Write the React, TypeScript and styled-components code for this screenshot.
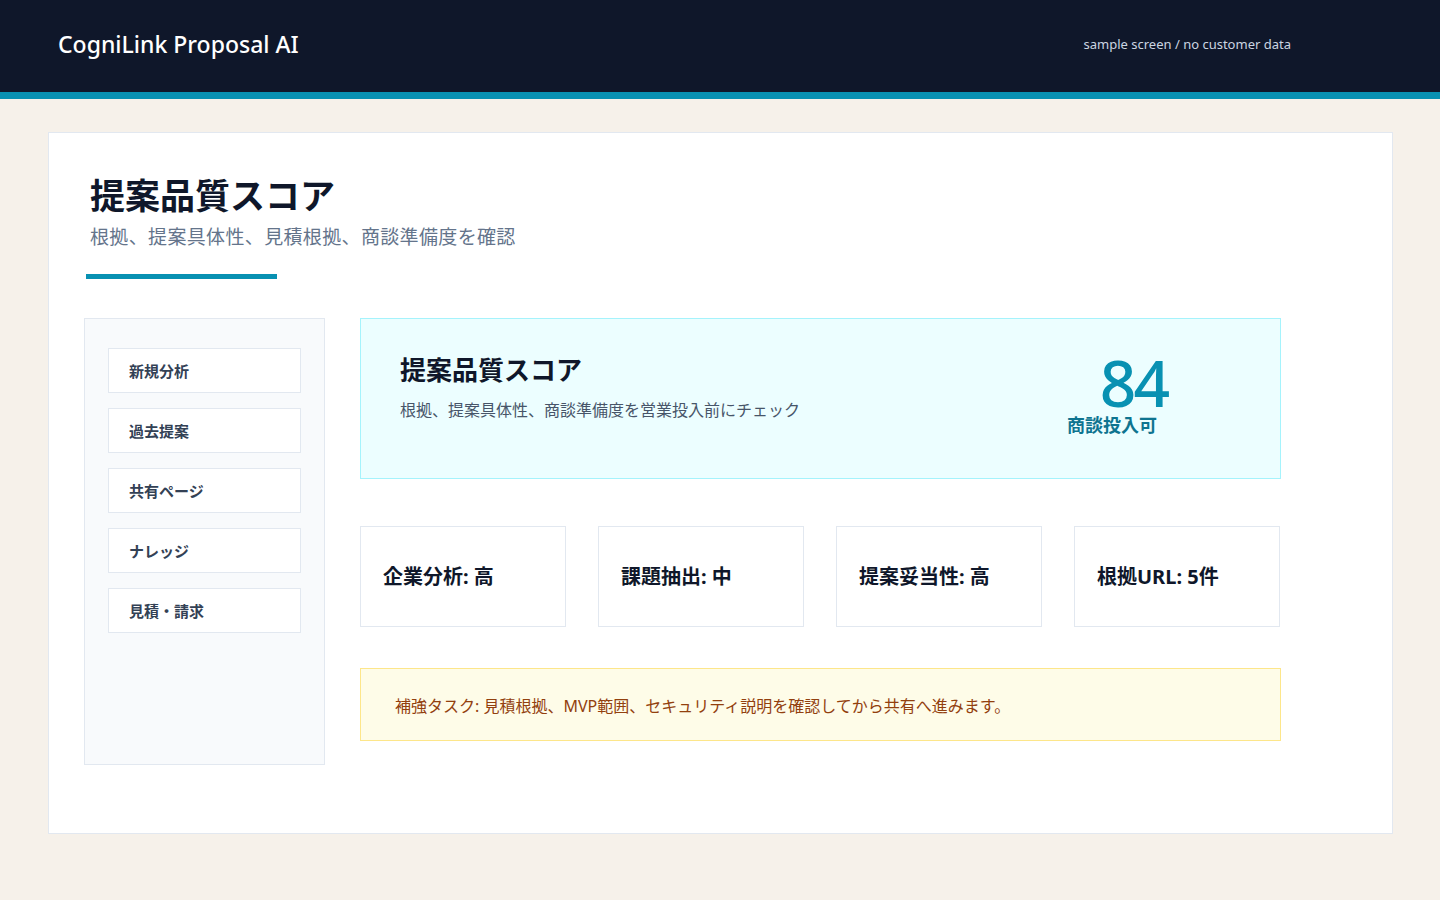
import React from 'react'
import styled, { createGlobalStyle } from 'styled-components'

const GlobalStyle = createGlobalStyle`
  * { box-sizing: border-box; }
  body {
    margin: 0;
    background: #f6f1ea;
    font-family: "Noto Sans", "Noto Sans CJK JP", sans-serif;
    color: #0f172a;
  }
`

const TopBar = styled.header`
  height: 99px;
  background: #0f172a;
  border-bottom: 7px solid #0891b2;
  display: flex;
  align-items: center;
  justify-content: space-between;
  padding: 0 149px 4px 58px;
`

const Brand = styled.div`
  color: #ffffff;
  font-size: 23px;
  font-weight: 500;
`

const Note = styled.div`
  color: #cbd5e1;
  font-size: 13px;
`

const Page = styled.main`
  padding: 33px 47px 67px 48px;
`

const Card = styled.section`
  background: #ffffff;
  border: 1px solid #e2e8f0;
  padding: 41px 36px 68px 35px;
`

const Heading = styled.div`
  padding-left: 6px;
`

const Title = styled.h1`
  margin: 0;
  font-size: 35px;
  line-height: 44px;
  font-weight: 700;
  color: #0f172a;
`

const Subtitle = styled.p`
  margin: 5px 0 0;
  font-size: 19px;
  line-height: 28px;
  letter-spacing: 0.35px;
  color: #64748b;
`

const Accent = styled.div`
  width: 191px;
  height: 5px;
  background: #0891b2;
  margin-top: 23px;
  margin-left: 2px;
`

const Layout = styled.div`
  display: grid;
  grid-template-columns: 241px 921px;
  gap: 35px;
  margin-top: 39px;
`

const Sidebar = styled.nav`
  background: #f8fafc;
  border: 1px solid #e2e8f0;
  min-height: 447px;
  padding: 29px 23px;
  display: flex;
  flex-direction: column;
  gap: 15px;
`

const NavItem = styled.div`
  height: 45px;
  background: #ffffff;
  border: 1px solid #e2e8f0;
  display: flex;
  align-items: center;
  padding-left: 20px;
  font-size: 15px;
  font-weight: 700;
  color: #334155;
`

const Content = styled.div`
  display: flex;
  flex-direction: column;
`

const ScorePanel = styled.div`
  height: 161px;
  background: #ecfeff;
  border: 1px solid #a5f3fc;
  display: flex;
  align-items: flex-start;
  justify-content: space-between;
  padding: 34px 113px 0 39px;
`

const PanelTitle = styled.h2`
  margin: 0;
  font-size: 26px;
  line-height: 34px;
  font-weight: 700;
  color: #0f172a;
`

const PanelText = styled.p`
  margin: 12px 0 0;
  font-size: 16px;
  line-height: 22px;
  color: #475569;
`

const ScoreBox = styled.div`
  display: flex;
  flex-direction: column;
  align-items: flex-end;
  margin-top: -2px;
`

const ScoreValue = styled.div`
  font-size: 64px;
  line-height: 64px;
  font-weight: 500;
  letter-spacing: -3px;
  color: #0891b2;
`

const ScoreLabel = styled.div`
  margin-right: 10px;
  font-size: 18px;
  line-height: 20px;
  font-weight: 700;
  color: #0e7490;
`

const Metrics = styled.div`
  display: grid;
  grid-template-columns: repeat(4, 206px);
  gap: 32px;
  margin-top: 47px;
`

const Metric = styled.div`
  height: 101px;
  border: 1px solid #e2e8f0;
  background: #ffffff;
  display: flex;
  align-items: center;
  padding: 0 0 2px 22px;
  font-size: 20px;
  font-weight: 700;
  color: #0f172a;
`

const Notice = styled.div`
  margin-top: 41px;
  height: 73px;
  background: #fefce8;
  border: 1px solid #fde68a;
  display: flex;
  align-items: center;
  padding: 0 0 0 34px;
  font-size: 16px;
  color: #92400e;
`

const navItems = ['新規分析', '過去提案', '共有ページ', 'ナレッジ', '見積・請求']

const metrics = ['企業分析: 高', '課題抽出: 中', '提案妥当性: 高', '根拠URL: 5件']

export default function App() {
  return (
    <>
      <GlobalStyle />
      <TopBar>
        <Brand>CogniLink Proposal AI</Brand>
        <Note>sample screen / no customer data</Note>
      </TopBar>
      <Page>
        <Card>
          <Heading>
            <Title>提案品質スコア</Title>
            <Subtitle>根拠、提案具体性、見積根拠、商談準備度を確認</Subtitle>
          </Heading>
          <Accent />
          <Layout>
            <Sidebar>
              {navItems.map((item) => (
                <NavItem key={item}>{item}</NavItem>
              ))}
            </Sidebar>
            <Content>
              <ScorePanel>
                <div>
                  <PanelTitle>提案品質スコア</PanelTitle>
                  <PanelText>根拠、提案具体性、商談準備度を営業投入前にチェック</PanelText>
                </div>
                <ScoreBox>
                  <ScoreValue>84</ScoreValue>
                  <ScoreLabel>商談投入可</ScoreLabel>
                </ScoreBox>
              </ScorePanel>
              <Metrics>
                {metrics.map((m) => (
                  <Metric key={m}>{m}</Metric>
                ))}
              </Metrics>
              <Notice>補強タスク: 見積根拠、MVP範囲、セキュリティ説明を確認してから共有へ進みます。</Notice>
            </Content>
          </Layout>
        </Card>
      </Page>
    </>
  )
}
